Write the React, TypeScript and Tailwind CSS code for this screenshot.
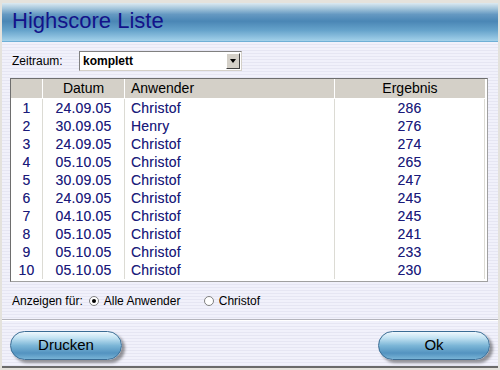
import React from "react";

const rows = [
  { nr: 1, datum: "24.09.05", name: "Christof", score: 286 },
  { nr: 2, datum: "30.09.05", name: "Henry", score: 276 },
  { nr: 3, datum: "24.09.05", name: "Christof", score: 274 },
  { nr: 4, datum: "05.10.05", name: "Christof", score: 265 },
  { nr: 5, datum: "30.09.05", name: "Christof", score: 247 },
  { nr: 6, datum: "24.09.05", name: "Christof", score: 245 },
  { nr: 7, datum: "04.10.05", name: "Christof", score: 245 },
  { nr: 8, datum: "05.10.05", name: "Christof", score: 241 },
  { nr: 9, datum: "05.10.05", name: "Christof", score: 233 },
  { nr: 10, datum: "05.10.05", name: "Christof", score: 230 },
];

const PillButton = ({ label }: { label: string }) => (
  <button className="relative w-[112px] h-[29px] rounded-full border border-[#3a6c94] bg-[linear-gradient(to_bottom,#eef8fd_0%,#c2e2f2_22%,#7cb6d7_50%,#5393c0_78%,#78b3d6_100%)] shadow-[3px_3px_3px_rgba(0,0,0,0.4)] text-[15px] text-black font-['Liberation_Sans',Arial,sans-serif]">
    {label}
  </button>
);

const Radio = ({ checked }: { checked?: boolean }) => (
  <span className="w-[10px] h-[10px] rounded-full border border-[#808080] bg-white flex items-center justify-center">
    {checked && <span className="w-[4px] h-[4px] rounded-full bg-black" />}
  </span>
);

export default function App() {
  return (
    <div className="w-[500px] h-[370px] bg-[#e4e2dc] pt-[3px] px-[2px] pb-[2px] font-['Liberation_Sans',Arial,sans-serif] overflow-hidden">
      <div className="h-full flex flex-col border-b-2 border-[#6a6a6a] bg-[repeating-linear-gradient(to_bottom,#f1f1fb_0px,#f1f1fb_2px,#e6e6f3_2px,#e6e6f3_3px)]">
        {/* Titelleiste */}
        <div className="h-[39px] shrink-0 flex items-center pl-[10px] border-b border-[#6fb0d6] bg-[linear-gradient(to_bottom,#dbe9f1_0%,#a6c7dc_14%,#6599c2_30%,#4a86b5_48%,#66a3cb_72%,#a3d1ea_100%)]">
          <span className="text-[22px] leading-none text-[#13138a] pb-[2px]">Highscore Liste</span>
        </div>

        {/* Zeitraum */}
        <div className="flex items-center mt-[9px] pl-[10px] h-[20px]">
          <span className="text-[12px] text-black w-[67px]">Zeitraum:</span>
          <div className="w-[163px] h-[20px] bg-white border border-t-[#808080] border-l-[#808080] border-r-[#d4d0c8] border-b-[#d4d0c8] flex items-center justify-between pl-[3px] pr-[1px]">
            <span className="text-[12px] font-bold text-black">komplett</span>
            <span className="w-[14px] h-[16px] bg-[#d4d0c8] border border-t-white border-l-white border-r-[#404040] border-b-[#404040] flex items-center justify-center">
              <span className="w-0 h-0 border-l-[3px] border-r-[3px] border-t-[4px] border-l-transparent border-r-transparent border-t-black" />
            </span>
          </div>
        </div>

        {/* Tabelle */}
        <div className="mt-[7px] ml-[8px] w-[478px] h-[204px] border border-t-[#6e6e6e] border-l-[#6e6e6e] border-r-[#a0a0a0] border-b-[#a0a0a0] bg-white flex flex-col">
          <div className="flex h-[20px] bg-[#d4d0c8] text-[14px] text-black border-b border-white mr-[2px]">
            <div className="w-[32px] border-r border-[#ffffff]" />
            <div className="w-[82px] border-r border-white flex items-center justify-center">Datum</div>
            <div className="w-[210px] border-r border-white flex items-center pl-[6px]">Anwender</div>
            <div className="flex-1 flex items-center justify-center">Ergebnis</div>
          </div>
          <div className="flex-1 flex flex-col">
            {rows.map((r) => (
              <div key={r.nr} className="flex h-[18px] text-[14px] text-[#1b1b7a] tracking-[0.2px] [text-shadow:0_0_0.3px_rgba(27,27,122,0.45)]">
                <div className="w-[32px] border-r border-[#dcdbd4] flex items-center justify-center">{r.nr}</div>
                <div className="w-[82px] border-r border-[#dcdbd4] flex items-center justify-center">{r.datum}</div>
                <div className="w-[210px] border-r border-[#dcdbd4] flex items-center pl-[6px]">{r.name}</div>
                <div className="w-[150px] border-r border-[#dcdbd4] flex items-center justify-center">{r.score}</div>
              </div>
            ))}
          </div>
        </div>

        {/* Anzeigen für */}
        <div className="flex items-center mt-[12px] pl-[10px] h-[14px] text-[12px] text-black">
          <span className="mr-[6px]">Anzeigen für:</span>
          <Radio checked />
          <span className="ml-[5px] w-[100px]">Alle Anwender</span>
          <Radio />
          <span className="ml-[5px]">Christof</span>
        </div>

        {/* Trennlinie */}
        <div className="mt-[11px] h-[2px] border-t border-[#b4b4bc] border-b border-b-white" />

        {/* Buttons */}
        <div className="flex justify-between items-start mt-[10px] pl-[8px] pr-[8px]">
          <PillButton label="Drucken" />
          <PillButton label="Ok" />
        </div>
      </div>
    </div>
  );
}
